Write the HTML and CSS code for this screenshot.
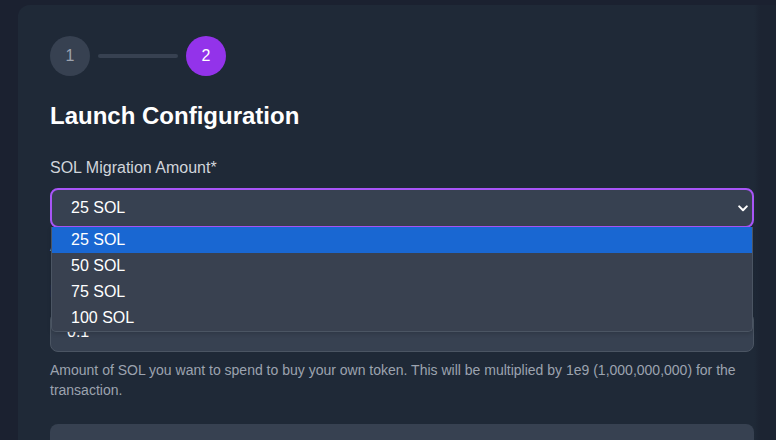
FILE: index.html
```html
<!DOCTYPE html>
<html>
<head>
<meta charset="utf-8">
<link rel="stylesheet" href="styles.css">
</head>
<body>
<div class="page">
  <div class="card">
    <div class="steps">
      <div class="step step-done">1</div>
      <div class="step-line"></div>
      <div class="step step-active">2</div>
    </div>
    <h2 class="title">Launch Configuration</h2>

    <div class="field">
      <label class="label">SOL Migration Amount*</label>
      <div class="select-wrap">
        <div class="select">
          <span>25 SOL</span>
          <svg class="chev" width="10" height="7" viewBox="0 0 10 7"><path d="M1.2 1.4 L5 5.2 L8.8 1.4" fill="none" stroke="#fff" stroke-width="2" stroke-linecap="round" stroke-linejoin="round"/></svg>
        </div>
        <div class="menu">
          <div class="opt opt-sel">25 SOL</div>
          <div class="opt">50 SOL</div>
          <div class="opt">75 SOL</div>
          <div class="opt">100 SOL</div>
        </div>
      </div>
      <p class="help">Amount of SOL that will be migrated to the liquidity pool.</p>
    </div>

    <div class="field">
      <label class="label">Initial Buy Amount (SOL)</label>
      <div class="input">0.1</div>
      <p class="help">Amount of SOL you want to spend to buy your own token. This will be multiplied by 1e9 (1,000,000,000) for the transaction.</p>
    </div>

    <div class="panel"></div>
  </div>
</div>
</body>
</html>
```

FILE: styles.css
```css
html, body {
  margin: 0;
  padding: 0;
  height: 100%;
  overflow: hidden;
  background: #1b2130;
  font-family: "Liberation Sans", Arial, sans-serif;
  color: #fff;
}
.page {
  padding: 5px 0 0 18px;
  width: 758px;
  height: 435px;
  overflow: hidden;
}
.card {
  width: 704px;
  padding: 31px 32px 32px 32px;
  border-radius: 12px;
  background: linear-gradient(to right, #1f2937 0, #1f2937 736px, #1c2432 742px, #1c2432 100%);
  min-height: 500px;
}
.steps {
  display: flex;
  align-items: center;
  gap: 8px;
}
.step {
  width: 40px;
  height: 40px;
  border-radius: 50%;
  display: flex;
  align-items: center;
  justify-content: center;
  font-size: 16px;
}
.step-done {
  background: #374151;
  color: #9ca3af;
}
.step-active {
  background: #9333ea;
  color: #fff;
}
.step-line {
  width: 80px;
  height: 4px;
  background: #374151;
  border-radius: 2px;
}
.title {
  margin: 24px 0 0 0;
  font-size: 24px;
  line-height: 32px;
  font-weight: 700;
  color: #fff;
}
.field {
  margin-top: 24px;
}
.label {
  display: block;
  font-size: 16px;
  line-height: 24px;
  color: #d1d5db;
  margin-bottom: 8px;
}
.select-wrap {
  position: relative;
}
.select {
  height: 40px;
  box-sizing: border-box;
  border: 2px solid #a855f7;
  border-radius: 8px;
  background: #374151;
  display: flex;
  align-items: center;
  justify-content: space-between;
  padding: 0 4px 0 19px;
  font-size: 16px;
  color: #fff;
}
.chev {
  display: block;
  margin-top: 1px;
}
.menu {
  position: absolute;
  left: 1px;
  right: 1px;
  top: 39px;
  background: #394150;
  border: 1px solid #4b5563;
  border-top: none;
  border-radius: 0 0 5px 5px;
  z-index: 5;
  box-shadow: 0 2px 4px rgba(0,0,0,0.15);
}
.opt {
  height: 26px;
  line-height: 26px;
  padding-left: 19px;
  font-size: 16px;
  color: #fff;
}
.opt-sel {
  background: #1967d2;
}
.help {
  margin: 8px 0 0 0;
  font-size: 14px;
  line-height: 20px;
  color: #9ca3af;
}
.input {
  height: 40px;
  box-sizing: border-box;
  border: 1px solid #4b5563;
  border-radius: 8px;
  background: #374151;
  display: flex;
  align-items: center;
  padding: 0 16px;
  font-size: 16px;
  color: #fff;
}
.panel {
  margin-top: 24px;
  height: 80px;
  border-radius: 8px;
  background: #374151;
}
```
